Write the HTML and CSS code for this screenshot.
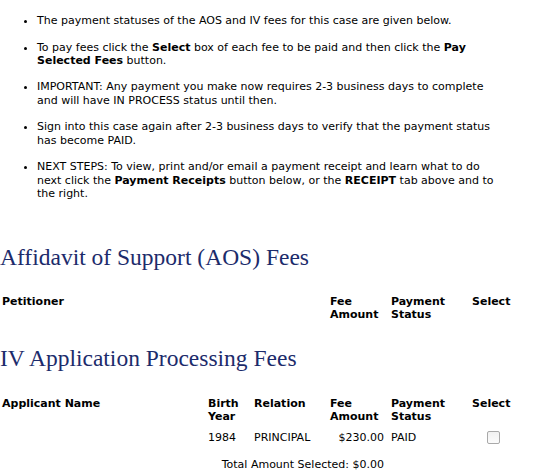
FILE: index.html
```html
<!DOCTYPE html>
<html lang="en">
  <head>
    <meta charset="UTF-8" />
    <title>Fees</title>
    <link rel="stylesheet" href="styles.css">
  </head>
  <body>
    <ul class="notes">
      <li>The payment statuses of the AOS and IV fees for this case are given below.</li>
      <li>To pay fees click the <b>Select</b> box of each fee to be paid and then click the <b>Pay Selected Fees</b> button.</li>
      <li>IMPORTANT: Any payment you make now requires 2-3 business days to complete and will have IN PROCESS status until then.</li>
      <li>Sign into this case again after 2-3 business days to verify that the payment status has become PAID.</li>
      <li>NEXT STEPS: To view, print and/or email a payment receipt and learn what to do next click the <b>Payment Receipts</b> button below, or the <b>RECEIPT</b> tab above and to the right.</li>
    </ul>

    <h2 class="first">Affidavit of Support (AOS) Fees</h2>
    <table class="fees">
      <colgroup>
        <col class="c-name" /><col class="c-year" /><col class="c-rel" />
        <col class="c-fee" /><col class="c-status" /><col class="c-select" />
      </colgroup>
      <tr class="head">
        <th colspan="3">Petitioner</th>
        <th>Fee Amount</th>
        <th>Payment Status</th>
        <th>Select</th>
      </tr>
    </table>

    <h2>IV Application Processing Fees</h2>
    <table class="fees">
      <colgroup>
        <col class="c-name" /><col class="c-year" /><col class="c-rel" />
        <col class="c-fee" /><col class="c-status" /><col class="c-select" />
      </colgroup>
      <tr class="head">
        <th>Applicant Name</th>
        <th>Birth Year</th>
        <th>Relation</th>
        <th>Fee Amount</th>
        <th>Payment Status</th>
        <th>Select</th>
      </tr>
      <tr class="row">
        <td></td>
        <td>1984</td>
        <td>PRINCIPAL</td>
        <td class="amount">$230.00</td>
        <td>PAID</td>
        <td class="pick"><input type="checkbox" disabled /></td>
      </tr>
      <tr class="total">
        <td colspan="4">Total Amount Selected: $0.00</td>
        <td></td>
        <td></td>
      </tr>
    </table>
  </body>
</html>
```

FILE: styles.css
```css
body {
  margin: 0;
  font-family: "DejaVu Sans", Verdana, sans-serif;
  font-size: 11px;
  line-height: 13.3px;
  color: #000;
  background-color: #ffffff;
}
.notes {
  margin: 14px 0 0 0;
  padding-left: 37px;
  width: 463px;
}
.notes li {
  margin-bottom: 13.3px;
}
h2 {
  font-family: "Liberation Serif", "Times New Roman", serif;
  font-weight: normal;
  font-size: 23.5px;
  line-height: 28px;
  color: #1c2b6b;
  margin: 16px 0 23px 0;
}
h2.first {
  margin-top: 43px;
  margin-bottom: 22px;
}
.fees {
  border-collapse: collapse;
  table-layout: fixed;
  width: 516px;
}
.fees th,
.fees td {
  padding: 2px;
  text-align: left;
  vertical-align: top;
}
.c-name { width: 206px; }
.c-year { width: 46px; }
.c-rel { width: 76px; }
.c-fee { width: 61px; }
.c-status { width: 81px; }
.c-select { width: 46px; }
.fees .head th {
  padding-bottom: 6px;
}
.fees .amount {
  text-align: right;
  padding-right: 5px;
}
.fees .pick {
  text-align: center;
}
.fees .pick input {
  appearance: none;
  display: inline-block;
  margin: 0;
  width: 13px;
  height: 13px;
  box-sizing: border-box;
  border: 1px solid #a9a9a9;
  border-radius: 2px;
  background: linear-gradient(#f1f1f1, #fbfbfb);
}
.fees .total td {
  text-align: right;
  padding-top: 8px;
  padding-right: 5px;
}
```
